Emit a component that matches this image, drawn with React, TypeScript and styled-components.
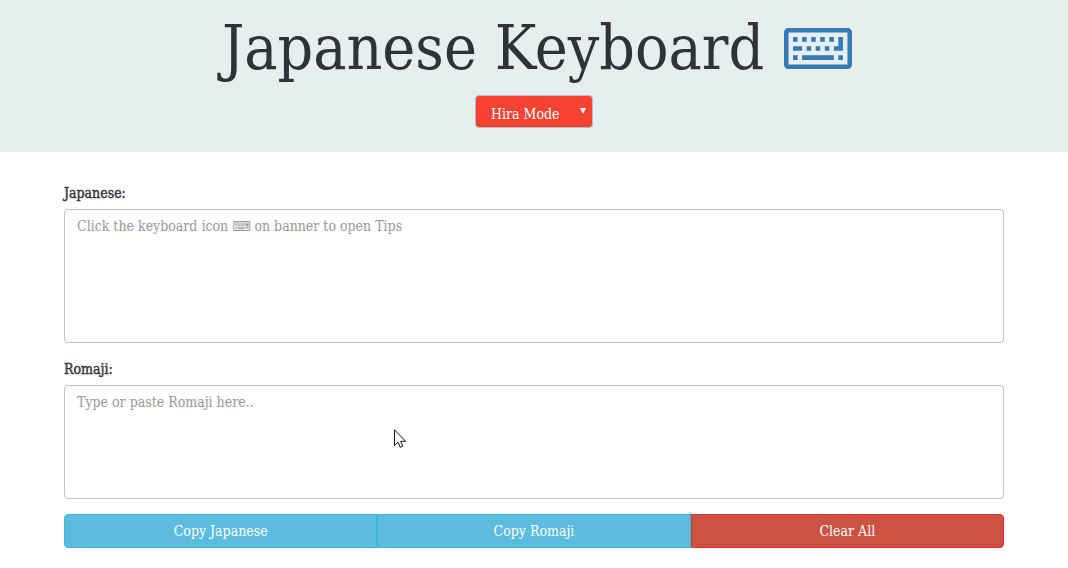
import React from 'react';
import styled, { createGlobalStyle } from 'styled-components';

const serif = '"DejaVu Serif Condensed", "DejaVu Serif", "Noto Sans CJK JP", serif';

const GlobalStyle = createGlobalStyle`
  *, *::before, *::after { box-sizing: border-box; }
  body {
    margin: 0;
    background: #ffffff;
    color: #30323a;
    font-family: ${serif};
    font-size: 14px;
    line-height: 20px;
  }
`;

const Page = styled.div`
  position: relative;
`;

const Banner = styled.header`
  display: flex;
  flex-direction: column;
  align-items: center;
  padding: 12px 16px 24px;
  background: #e7efee;
`;

const Title = styled.h1`
  display: flex;
  align-items: center;
  gap: 20px;
  margin: 0 0 11px;
  padding-left: 6px;
  font-size: 62px;
  font-weight: 400;
  line-height: 72px;
  white-space: nowrap;
`;

const TipsLink = styled.a`
  display: flex;
  color: #337ab7;
`;

const KeyboardSvg = styled.svg`
  width: 68px;
  height: 41px;
  fill: currentColor;
`;

const SelectWrap = styled.div`
  position: relative;
  display: flex;
`;

const ModeSelect = styled.select`
  appearance: none;
  width: 118px;
  height: 33px;
  margin: 0;
  padding: 4px 24px 0 15px;
  border: 1px solid #b9bcc8;
  border-radius: 4px;
  background: #f94332;
  color: #ffffff;
  font: inherit;
`;

const Arrow = styled.svg`
  position: absolute;
  top: 13px;
  right: 7px;
  width: 6px;
  height: 6px;
  fill: #ffffff;
  pointer-events: none;
`;

const Container = styled.main`
  max-width: 970px;
  margin: 0 auto;
  padding: 30px 15px 20px;
`;

const Field = styled.div`
  display: flex;
  flex-direction: column;
  gap: 5px;
  margin-bottom: 15px;
`;

const Label = styled.label`
  align-self: flex-start;
  line-height: 22px;
  -webkit-text-stroke: 0.4px currentColor;
`;

const TextArea = styled.textarea<{ $lines: number }>`
  display: block;
  width: 100%;
  height: ${(p) => p.$lines * 20 + 14}px;
  padding: 6px 12px;
  border: 1px solid #c5c2cf;
  border-radius: 4px;
  background: #ffffff;
  color: #555555;
  font: inherit;
  resize: none;
  outline: none;
  &::placeholder { color: #999999; opacity: 1; }
`;

const ButtonGroup = styled.div`
  display: grid;
  grid-template-columns: repeat(3, 1fr);
`;

const ActionButton = styled.button<{ $tone: 'info' | 'danger' }>`
  height: 34px;
  padding: 0 12px;
  border: 1px solid ${(p) => (p.$tone === 'info' ? '#3bb9d8' : '#cf3a38')};
  border-radius: 0;
  background: ${(p) => (p.$tone === 'info' ? '#5bbcde' : '#cd5242')};
  color: #ffffff;
  font: inherit;
  cursor: pointer;
  &:first-child { border-radius: 4px 0 0 4px; }
  &:last-child { border-radius: 0 4px 4px 0; }
`;

const Pointer = styled.svg`
  position: absolute;
  left: 394px;
  top: 429px;
  width: 13px;
  height: 20px;
  pointer-events: none;
`;

const KeyboardIcon = () => (
  <KeyboardSvg viewBox="0 0 15 9" preserveAspectRatio="none" aria-hidden="true">
    <path
      fillRule="evenodd"
      d="M1 0H14A1 1 0 0 1 15 1V8A1 1 0 0 1 14 9H1A1 1 0 0 1 0 8V1A1 1 0 0 1 1 0ZM1 1V8H14V1Z"
    />
    <path d="M2 2h1v1h-1zM4 2h1v1h-1zM6 2h1v1h-1zM8 2h1v1h-1zM10 2h1v1h-1zM12 2h1v3h-2v-1h1z" />
    <path d="M2 4h2v1h-2zM5 4h1v1h-1zM7 4h1v1h-1zM9 4h1v1h-1zM2 6h1v1h-1zM4 6h7v1h-7zM12 6h1v1h-1z" />
  </KeyboardSvg>
);

export default function App() {
  return (
    <Page>
      <GlobalStyle />
      <Banner>
        <Title>
          Japanese Keyboard
          <TipsLink href="#tips" aria-label="Open tips">
            <KeyboardIcon />
          </TipsLink>
        </Title>
        <SelectWrap>
          <ModeSelect aria-label="Input mode" defaultValue="hira">
            <option value="hira">Hira Mode</option>
          </ModeSelect>
          <Arrow viewBox="0 0 6 6" aria-hidden="true">
            <path d="M0 0H6L3 6Z" />
          </Arrow>
        </SelectWrap>
      </Banner>
      <Container>
        <Field>
          <Label htmlFor="japanese">Japanese:</Label>
          <TextArea
            id="japanese"
            $lines={6}
            placeholder="Click the keyboard icon ⌨ on banner to open Tips"
          />
        </Field>
        <Field>
          <Label htmlFor="romaji">Romaji:</Label>
          <TextArea id="romaji" $lines={5} placeholder="Type or paste Romaji here.." />
        </Field>
        <ButtonGroup>
          <ActionButton type="button" $tone="info">Copy Japanese</ActionButton>
          <ActionButton type="button" $tone="info">Copy Romaji</ActionButton>
          <ActionButton type="button" $tone="danger">Clear All</ActionButton>
        </ButtonGroup>
      </Container>
      <Pointer viewBox="0 0 13 20" aria-hidden="true">
        <path
          d="M0.5 0.8V16.5L4 13.2L6.3 18.3L8.9 17.2L6.6 12.3H11.6Z"
          fill="#ffffff"
          stroke="#1c1418"
          strokeWidth="1"
        />
      </Pointer>
    </Page>
  );
}
